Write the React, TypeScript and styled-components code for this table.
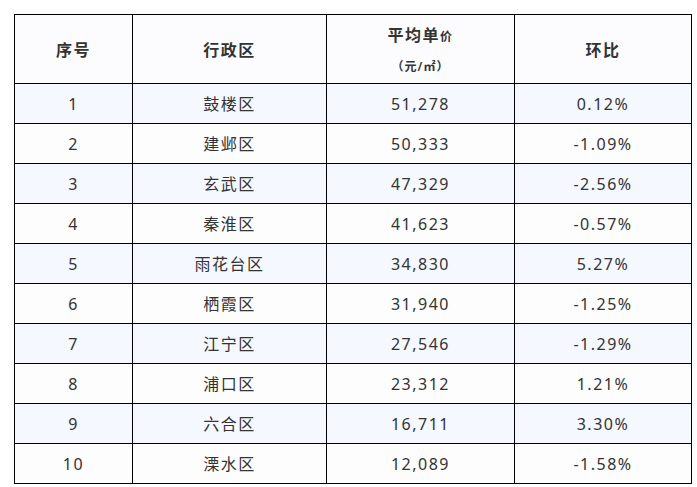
import React from "react";
import styled, { createGlobalStyle } from "styled-components";

const Global = createGlobalStyle`
  html, body { margin: 0; padding: 0; background: #ffffff; }
  body { font-family: "Noto Sans", "Noto Sans CJK SC", sans-serif; }
`;

const Page = styled.div`
  padding: 14px 0 0 14px;
`;

const Table = styled.table`
  border-collapse: collapse;
  table-layout: fixed;
  width: 677px;
  color: #333333;
  font-size: 16px;
  letter-spacing: 1.5px;
`;

const HeadRow = styled.tr`
  background: #fcfcfe;
  height: 69px;
`;

const BodyRow = styled.tr<{ $odd: boolean }>`
  background: ${(p) => (p.$odd ? "#f5f8fe" : "#fdfdfe")};
  height: 40px;
`;

const Th = styled.th`
  border: 1px solid #000000;
  font-weight: 700;
  text-align: center;
  vertical-align: middle;
  padding: 0;
  color: #333333;
`;

const Td = styled.td`
  border: 1px solid #000000;
  text-align: center;
  vertical-align: middle;
  padding: 0;
  line-height: 20px;
`;

const PriceHead = styled.div`
  margin-top: 3px;
`;

const HeadLine = styled.div`
  line-height: 30px;
`;

const Small = styled.span`
  font-size: 12px;
`;

const UnitLine = styled.div`
  line-height: 30px;
  font-size: 12px;
  font-weight: 600;
  letter-spacing: 1px;
`;

const rows: [string, string, string][] = [
  ["鼓楼区", "51,278", "0.12%"],
  ["建邺区", "50,333", "-1.09%"],
  ["玄武区", "47,329", "-2.56%"],
  ["秦淮区", "41,623", "-0.57%"],
  ["雨花台区", "34,830", "5.27%"],
  ["栖霞区", "31,940", "-1.25%"],
  ["江宁区", "27,546", "-1.29%"],
  ["浦口区", "23,312", "1.21%"],
  ["六合区", "16,711", "3.30%"],
  ["溧水区", "12,089", "-1.58%"],
];

export default function App() {
  return (
    <>
      <Global />
      <Page>
        <Table>
          <colgroup>
            <col style={{ width: 118 }} />
            <col style={{ width: 194 }} />
            <col style={{ width: 188 }} />
            <col style={{ width: 177 }} />
          </colgroup>
          <thead>
            <HeadRow>
              <Th>序号</Th>
              <Th>行政区</Th>
              <Th>
                <PriceHead>
                  <HeadLine>
                    平均单<Small>价</Small>
                  </HeadLine>
                  <UnitLine>（元/㎡）</UnitLine>
                </PriceHead>
              </Th>
              <Th>环比</Th>
            </HeadRow>
          </thead>
          <tbody>
            {rows.map((r, i) => (
              <BodyRow key={i} $odd={i % 2 === 0}>
                <Td>{i + 1}</Td>
                <Td>{r[0]}</Td>
                <Td>{r[1]}</Td>
                <Td>{r[2]}</Td>
              </BodyRow>
            ))}
          </tbody>
        </Table>
      </Page>
    </>
  );
}
